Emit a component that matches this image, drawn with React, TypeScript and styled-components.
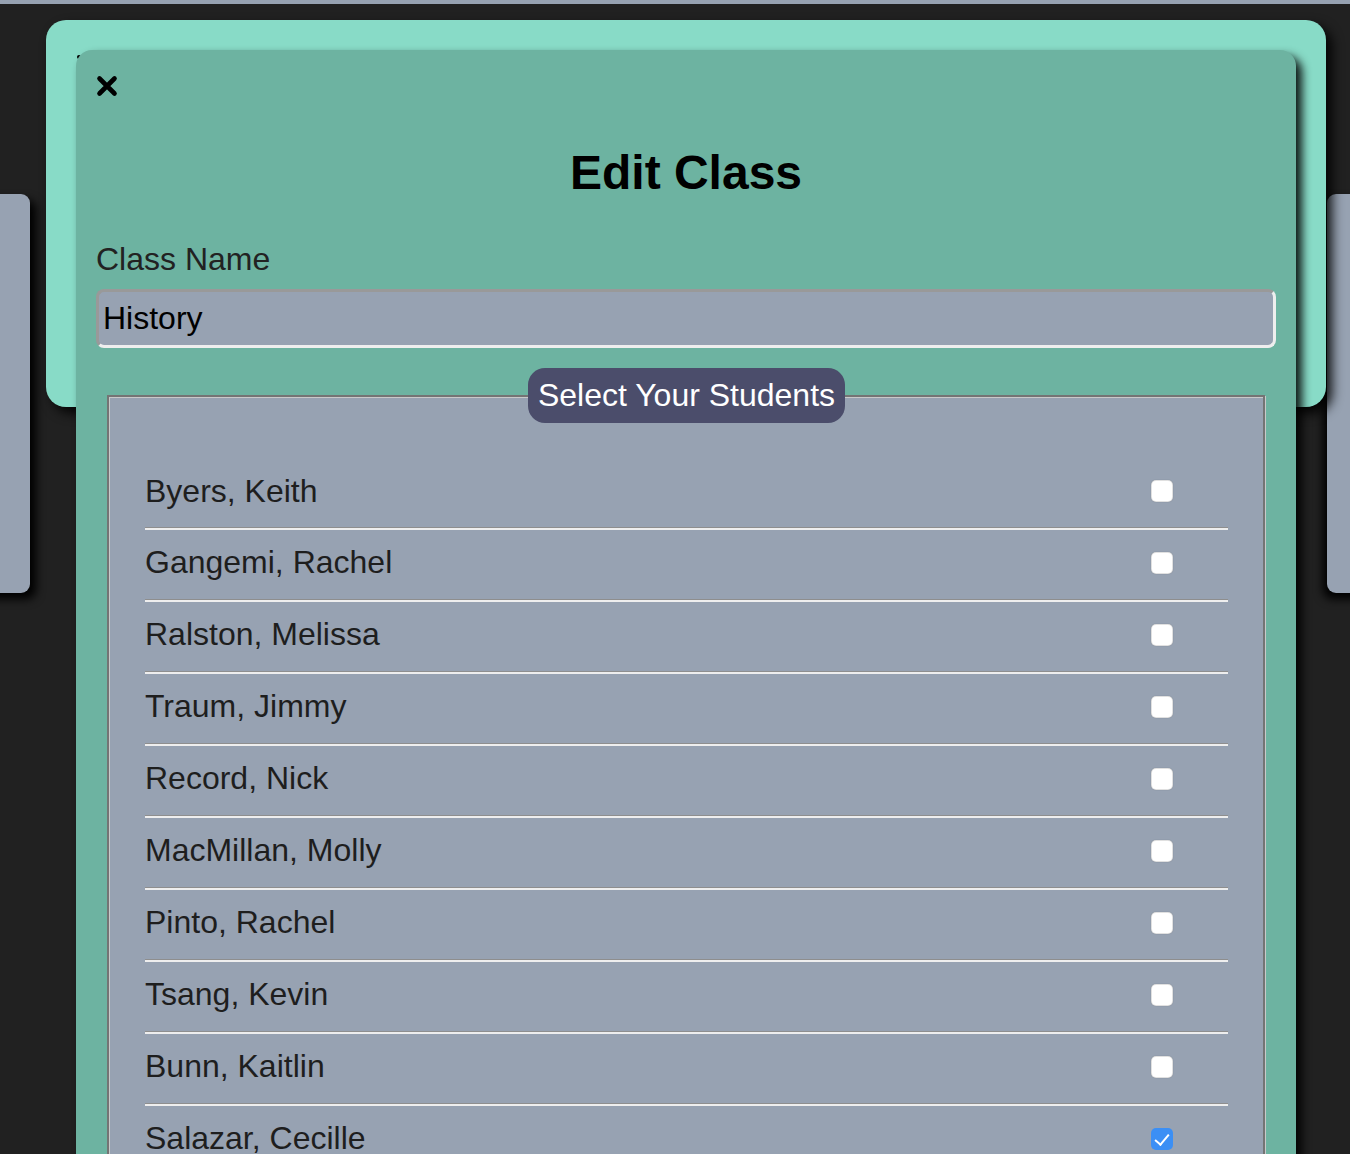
import React from "react"
import styled, { createGlobalStyle } from "styled-components"

const students = [
  { name: "Byers, Keith", checked: false },
  { name: "Gangemi, Rachel", checked: false },
  { name: "Ralston, Melissa", checked: false },
  { name: "Traum, Jimmy", checked: false },
  { name: "Record, Nick", checked: false },
  { name: "MacMillan, Molly", checked: false },
  { name: "Pinto, Rachel", checked: false },
  { name: "Tsang, Kevin", checked: false },
  { name: "Bunn, Kaitlin", checked: false },
  { name: "Salazar, Cecille", checked: true },
]

const GlobalStyle = createGlobalStyle`
  html, body {
    margin: 0;
    padding: 0;
    height: 100%;
    overflow: hidden;
    background: #212121;
    font-family: "Liberation Sans", Arial, sans-serif;
  }
`

const App: React.FC = () => {
  return (
    <Page>
      <GlobalStyle />
      <TopBar />
      <CardRow>
        <Card side="left" />
        <Card side="right" />
      </CardRow>

      <Overlay>
        <Backdrop>
          <Dot />
        </Backdrop>
        <Modal>
          <CloseButton aria-label="Close">
            <svg width="22" height="22" viewBox="0 0 22 22">
              <path
                d="M3.5 3.5 L18.5 18.5 M18.5 3.5 L3.5 18.5"
                stroke="#000"
                strokeWidth="4.6"
                strokeLinecap="round"
              />
            </svg>
          </CloseButton>
          <Title>Edit Class</Title>
          <Label htmlFor="className">Class Name</Label>
          <NameInput id="className" defaultValue="History" />

          <StudentSet>
            <Legend>Select Your Students</Legend>
            {students.map((s) => (
              <Row key={s.name}>
                <span>{s.name}</span>
                <Check type="checkbox" defaultChecked={s.checked} />
              </Row>
            ))}
          </StudentSet>
        </Modal>
      </Overlay>
    </Page>
  )
}

const Page = styled.div`
  position: relative;
  min-height: 100vh;
`

const TopBar = styled.header`
  height: 4px;
  background: #97a2b2;
`

const CardRow = styled.div`
  display: flex;
  justify-content: space-between;
  margin: 190px -277px 0 -270px;
`

const Card = styled.div<{ side: "left" | "right" }>`
  width: 300px;
  height: 399px;
  background: #97a2b2;
  border-radius: 9px;
  box-shadow: ${({ side }) =>
    side === "left" ? "6px 6px 10px #000" : "-4px 6px 10px #000"};
`

const Overlay = styled.div`
  position: absolute;
  top: 20px;
  left: 46px;
  width: 1280px;
`

const Backdrop = styled.div`
  height: 387px;
  background: #88dbc7;
  border-radius: 20px;
  box-shadow: 6px 6px 12px rgba(0, 0, 0, 0.9);
  padding: 35px 0 0 31px;
  box-sizing: border-box;
`

const Dot = styled.div`
  width: 4px;
  height: 4px;
  border-radius: 50%;
  background: #000;
`

const Modal = styled.div`
  position: absolute;
  top: 30px;
  left: 30px;
  width: 1220px;
  box-sizing: border-box;
  padding: 25px 20px 120px;
  background: #6db3a1;
  border-radius: 16px;
  box-shadow: 6px 6px 10px rgba(0, 0, 0, 0.9);
  display: flex;
  flex-direction: column;
`

const CloseButton = styled.button`
  align-self: flex-start;
  width: 22px;
  height: 22px;
  padding: 0;
  border: none;
  background: none;
  cursor: pointer;
  display: flex;

  svg {
    display: block;
  }
`

const Title = styled.h1`
  margin: 48px 0 0;
  font-size: 48px;
  line-height: 55px;
  font-weight: bold;
  text-align: center;
  color: #000;
`

const Label = styled.label`
  margin-top: 41px;
  font-size: 32px;
  line-height: 37px;
  color: #222;
`

const NameInput = styled.input`
  margin-top: 11px;
  height: 59px;
  box-sizing: border-box;
  width: 100%;
  padding: 0 4px;
  font-family: "Liberation Sans", Arial, sans-serif;
  font-size: 32px;
  color: #000;
  background: #97a2b2;
  border: 3px solid;
  border-color: #999 #eee #eee #999;
  border-radius: 8px;
  outline: none;
`

const StudentSet = styled.fieldset`
  margin: 20px 11px 0;
  padding: 36px 35px 0 36px;
  min-width: 0;
  background: #97a2b2;
  border: 2px solid #747474;
  box-shadow: inset 1px 1px 0 #c9c9c9, 1px 1px 0 #c9c9c9;
`

const Legend = styled.legend`
  margin: 0 auto;
  padding: 0 10px;
  height: 55px;
  line-height: 55px;
  font-size: 32px;
  color: #fff;
  background: #4b4d6b;
  border-radius: 17px;
`

const Row = styled.label`
  display: flex;
  align-items: center;
  justify-content: space-between;
  height: 72px;
  box-sizing: border-box;
  padding: 0 55px 5px 0;
  border-bottom: 2px solid #eeeeee;
  box-shadow: inset 0 -1px 0 #8e8e8e;
  font-size: 32px;
  line-height: 37px;
  color: #1e1e1e;

  &:first-of-type {
    height: 71px;
  }
`

const Check = styled.input`
  appearance: none;
  margin: 0;
  width: 22px;
  height: 22px;
  border-radius: 5px;
  background: #fff;
  box-shadow: inset 0 0 0 1px rgba(0, 0, 0, 0.12), 0 0 1px rgba(0, 0, 0, 0.3);
  position: relative;

  &:checked {
    background: #3b8ff5;
    box-shadow: none;
  }

  &:checked::after {
    content: "";
    position: absolute;
    left: 7px;
    top: 3px;
    width: 6px;
    height: 12px;
    border: solid #fff;
    border-width: 0 2.5px 2.5px 0;
    transform: rotate(40deg);
  }
`

export default App
